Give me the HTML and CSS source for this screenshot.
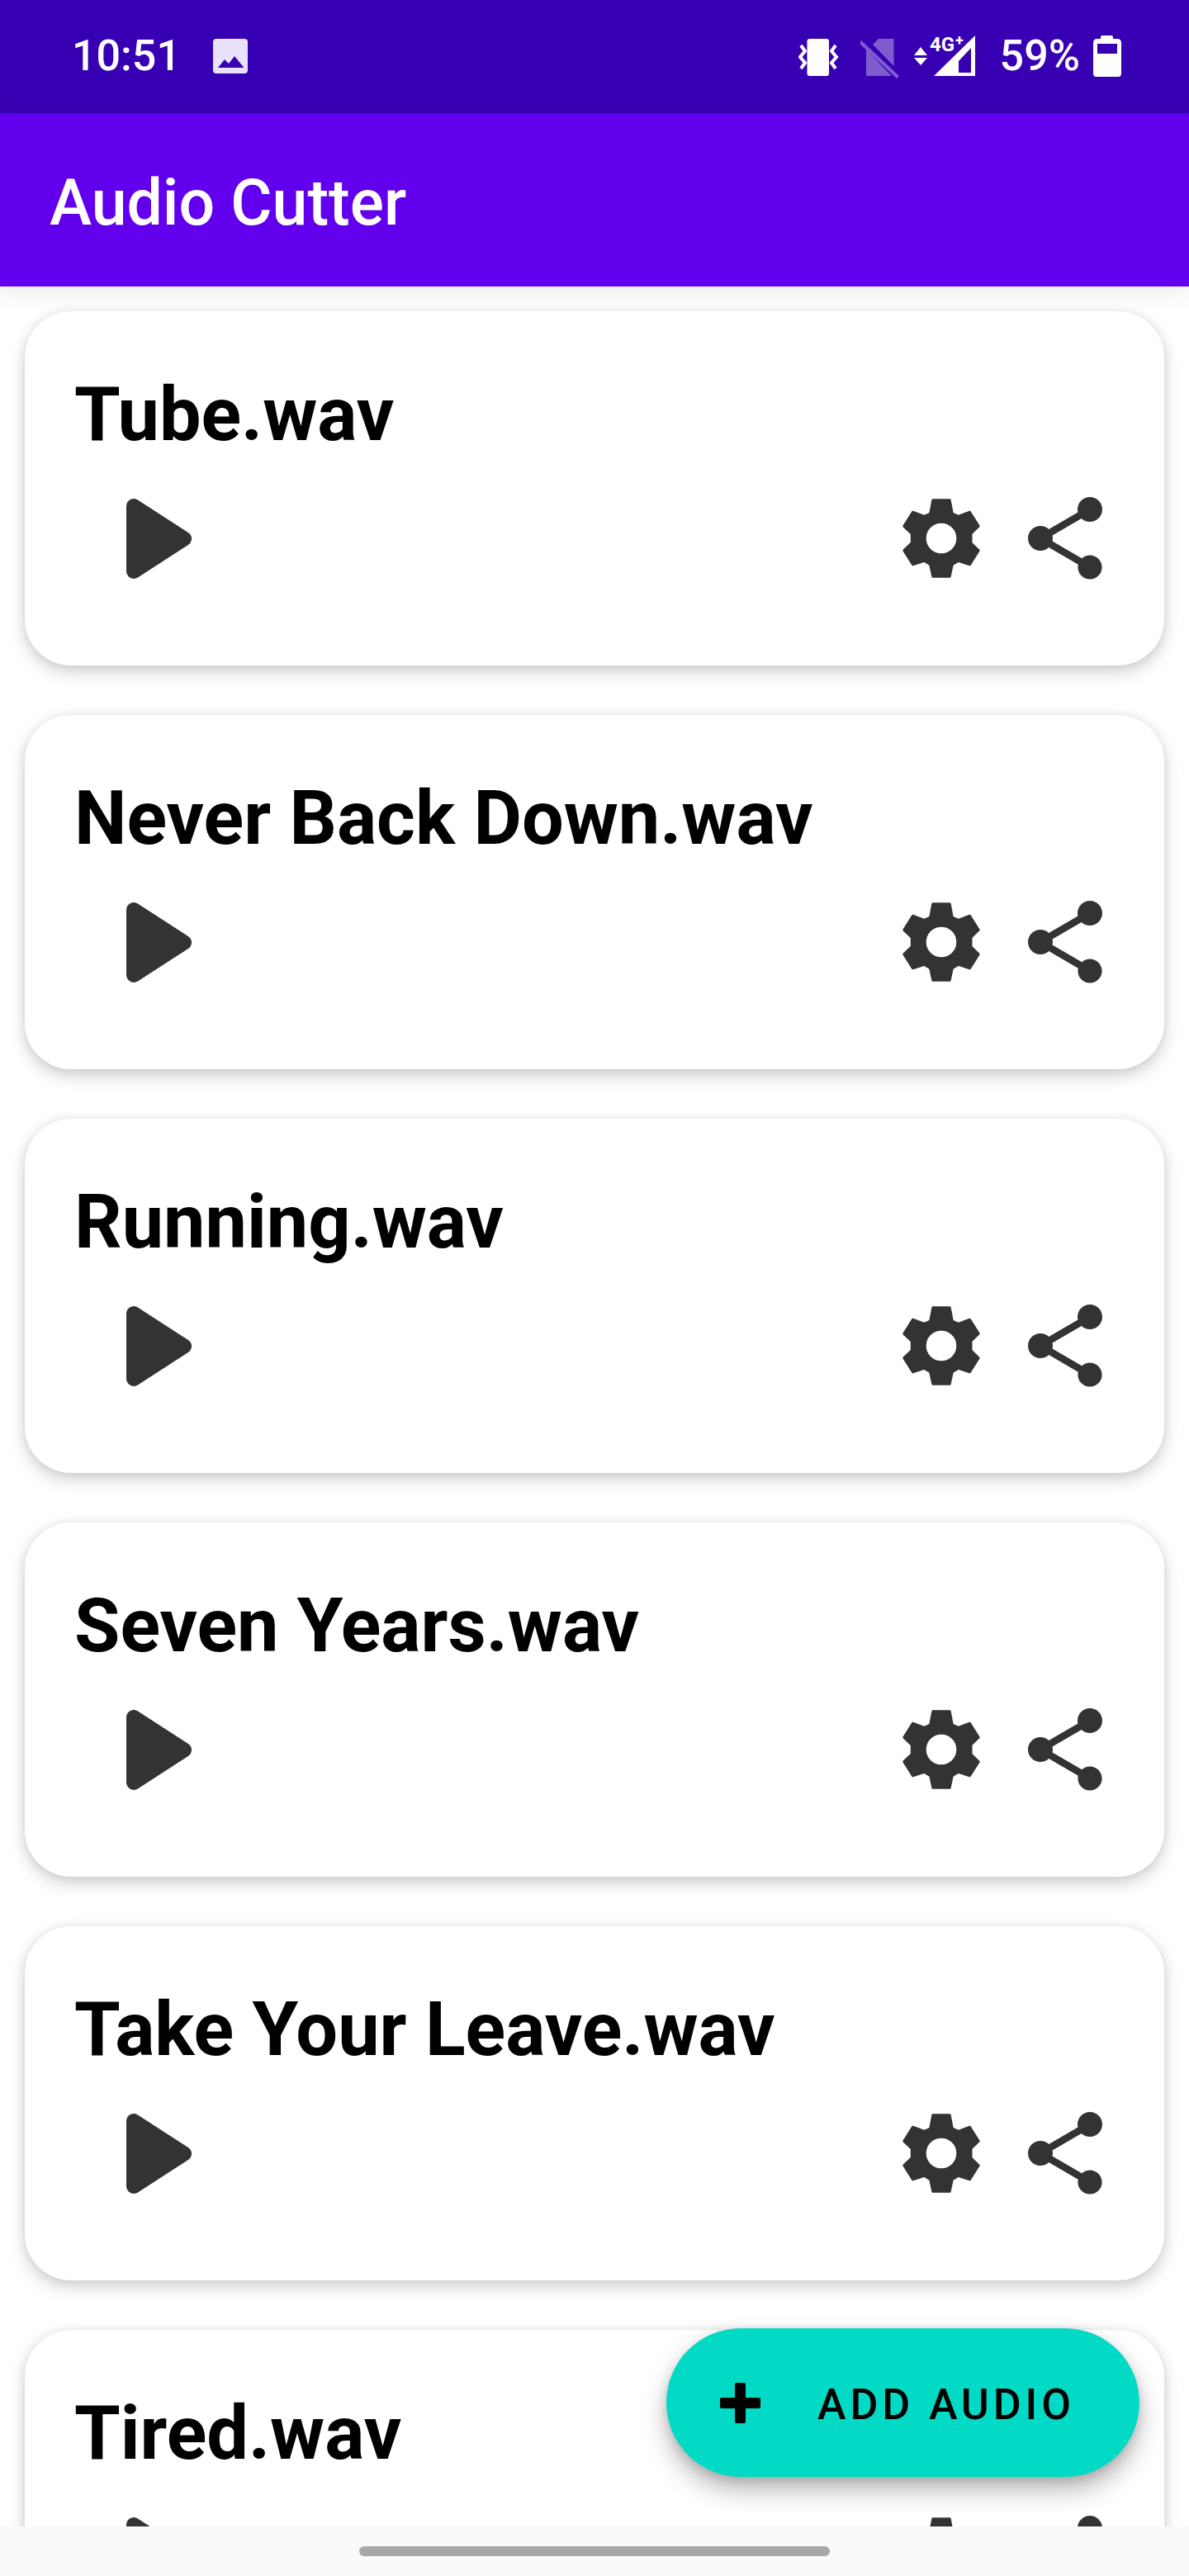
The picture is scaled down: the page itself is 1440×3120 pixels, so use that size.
FILE: index.html
```html
<!DOCTYPE html>
<html lang="en">
<head>
<meta charset="utf-8">
<title>Audio Cutter</title>
<link rel="stylesheet" href="styles.css">
</head>
<body>
<svg class="defs" aria-hidden="true">
  <defs>
    <symbol id="play" viewBox="153 603 79 97"><polygon points="162,612 162,691 223,651.5" fill="#333" stroke="#333" stroke-width="18" stroke-linejoin="round"/></symbol>
    <symbol id="gear" viewBox="0 0 120 120"><path fill="#333" fill-rule="evenodd" stroke="#333" stroke-width="3" stroke-linejoin="round" d="M49.8 13.800H70.200L73.300 30L80.700 33.300L94.500 28.200L105.200 45.300L96 54.300V65.700L105.200 74.700L94.500 91.800L80.700 87.300L73.300 91.700L70.200 106.200H49.800L46.700 91.700L39.300 87.300L25.500 91.800L14.800 74.700L24.300 65.700V54.300L14.800 45.300L25.500 28.200L39.300 33.300L46.700 30ZM60 40.200A19.800 19.800 0 1 0 60 79.800A19.800 19.800 0 1 0 60 40.200Z"/></symbol>
    <symbol id="share" viewBox="0 0 24 24"><path fill="#333" d="M18 16.08c-.76 0-1.44.3-1.96.77L8.91 12.7c.05-.23.09-.46.09-.7s-.04-.47-.09-.7l7.05-4.11c.54.5 1.25.81 2.04.81 1.66 0 3-1.34 3-3s-1.34-3-3-3-3 1.34-3 3c0 .24.04.47.09.7L8.04 9.81C7.5 9.31 6.79 9 6 9c-1.66 0-3 1.34-3 3s1.34 3 3 3c.79 0 1.5-.31 2.04-.81l7.12 4.16c-.05.21-.08.43-.08.65 0 1.61 1.31 2.92 2.92 2.92s2.92-1.31 2.92-2.92-1.31-2.92-2.92-2.92z"/></symbol>
  </defs>
</svg>
<div class="screen">
  <header class="status-bar">
    <div class="status-left">
      <span class="clock">10:51</span>
      <svg class="ic-image" viewBox="256 47 42 42"><rect x="256" y="47" width="42" height="42" rx="4" fill="#e9e2fb"/><polygon points="262,82 270,72 275,77 282,68 293.500,82" fill="#3700b3"/></svg>
    </div>
    <div class="status-right">
      <svg class="ic-vibrate" viewBox="967 30 49 70"><rect x="977.5" y="47" width="26.5" height="45" rx="3" fill="#fff"/><polyline points="970,55 975,62 969,69 975,76 970,83" fill="none" stroke="#fff" stroke-width="4"/><polyline points="1012,55 1007,62 1013,69 1007,76 1012,83" fill="none" stroke="#fff" stroke-width="4"/></svg>
      <svg class="ic-sim" viewBox="1043 30 46 70"><g fill="#fff" fill-opacity=".36"><polygon points="1058,54 1065,47 1083.5,47 1083.5,80"/><polygon points="1050,57 1050,92 1081,92 1050,60"/><polygon points="1041,52 1044,49 1090,92 1087,95"/></g></svg>
      <svg class="ic-net" viewBox="1108 30 75 70"><polygon points="1116,57 1124,67 1108,67" fill="#fff"/><polygon points="1108,70 1124,70 1116,79" fill="#fff"/><path fill="#fff" fill-rule="evenodd" d="M1182 43V92H1132ZM1177 58L1162 74V88H1177Z"/><text x="1127" y="62" class="net-label">4G</text><text x="1158" y="55" class="net-plus">+</text></svg>
      <span class="battery-text">59%</span>
      <svg class="ic-battery" viewBox="1324 30 34 70"><path fill="#fff" fill-rule="evenodd" d="M1335 43H1346Q1348 43 1348 45V47H1353Q1358 47 1358 52V89Q1358 93 1354 93H1328Q1324 93 1324 89V52Q1324 47 1329 47H1333V45Q1333 43 1335 43ZM1329 53V65H1353V53Z"/></svg>
    </div>
  </header>
  <div class="toolbar"><h1 class="app-title">Audio Cutter</h1></div>
  <main class="list">
    <article class="card">
      <h2 class="track-name">Tube.wav</h2>
      <div class="actions">
        <svg class="play"><use href="#play"/></svg>
        <div class="tools"><svg class="tool"><use href="#gear"/></svg><svg class="tool"><use href="#share"/></svg></div>
      </div>
    </article>
    <article class="card">
      <h2 class="track-name">Never Back Down.wav</h2>
      <div class="actions">
        <svg class="play"><use href="#play"/></svg>
        <div class="tools"><svg class="tool"><use href="#gear"/></svg><svg class="tool"><use href="#share"/></svg></div>
      </div>
    </article>
    <article class="card">
      <h2 class="track-name">Running.wav</h2>
      <div class="actions">
        <svg class="play"><use href="#play"/></svg>
        <div class="tools"><svg class="tool"><use href="#gear"/></svg><svg class="tool"><use href="#share"/></svg></div>
      </div>
    </article>
    <article class="card">
      <h2 class="track-name">Seven Years.wav</h2>
      <div class="actions">
        <svg class="play"><use href="#play"/></svg>
        <div class="tools"><svg class="tool"><use href="#gear"/></svg><svg class="tool"><use href="#share"/></svg></div>
      </div>
    </article>
    <article class="card">
      <h2 class="track-name">Take Your Leave.wav</h2>
      <div class="actions">
        <svg class="play"><use href="#play"/></svg>
        <div class="tools"><svg class="tool"><use href="#gear"/></svg><svg class="tool"><use href="#share"/></svg></div>
      </div>
    </article>
    <article class="card">
      <h2 class="track-name">Tired.wav</h2>
      <div class="actions">
        <svg class="play"><use href="#play"/></svg>
        <div class="tools"><svg class="tool"><use href="#gear"/></svg><svg class="tool"><use href="#share"/></svg></div>
      </div>
    </article>
  </main>
  <footer class="nav-bar"><div class="nav-pill"></div></footer>
  <button class="fab" type="button">
    <svg class="fab-plus" viewBox="0 0 49 49"><path d="M24.500 3V46M3 24.500H46" stroke="#000" stroke-width="13" stroke-linecap="round" fill="none"/></svg>
    <span class="fab-label">ADD AUDIO</span>
  </button>
</div>
</body>
</html>
```
FILE: styles.css
```css
* { box-sizing: border-box; }
html, body { margin: 0; padding: 0; }
html { height: 3120px; overflow: hidden; }
body { width: 1440px; height: 3120px; overflow: hidden; font-family: Roboto, "Liberation Sans", sans-serif; background: #fff; }
.defs { display: none; }
.screen { position: relative; width: 1440px; height: 3120px; display: flex; flex-direction: column; overflow: hidden; }

.status-bar { flex: 0 0 137px; background: #3700b3; color: #fff; display: flex; justify-content: space-between; align-items: flex-start; }
.status-left { display: flex; align-items: flex-start; padding: 37px 0 0 87px; }
.clock { font-size: 52px; line-height: 62px; font-weight: 500; }
.ic-image { width: 42px; height: 42px; margin: 10px 0 0 39px; }
.status-right { display: flex; align-items: flex-start; padding: 0 82px 0 0; }
.status-right svg { display: block; height: 70px; margin-top: 30px; }
.ic-vibrate { width: 49px; }
.ic-sim { width: 46px; margin-left: 26px; }
.ic-net { width: 75px; margin-left: 19px; }
.net-label { font: 700 24px Roboto, sans-serif; fill: #fff; }
.net-plus { font: 700 18px Roboto, sans-serif; fill: #fff; }
.battery-text { font-size: 52px; line-height: 62px; margin: 37px 0 0 29px; font-weight: 500; }
.ic-battery { width: 34px; margin-left: 16px; }

.toolbar { flex: 0 0 210px; background: #6200ee; display: flex; align-items: center; padding: 8px 0 0 60px; position: relative; z-index: 2; box-shadow: 0 4px 28px rgba(0,0,0,.10); }
.app-title { margin: 0; font-size: 77px; font-weight: 500; color: #fff; }

.list { flex: 1 1 auto; min-height: 0; overflow: hidden; padding: 30px 30px 0; display: flex; flex-direction: column; gap: 60px; }
.card { flex: 0 0 429px; background: #fff; border-radius: 56px; box-shadow: 0 8px 20px rgba(0,0,0,.18), 0 0 12px rgba(0,0,0,.07); padding: 76px 60px 0 60px; }
.track-name { margin: 0; font-size: 90px; line-height: 100px; font-weight: 700; color: #000; }
.actions { display: flex; justify-content: space-between; align-items: center; height: 120px; margin-top: 39px; padding-left: 63px; }
.play { width: 79px; height: 97px; }
.tools { display: flex; gap: 30px; }
.tool { width: 120px; height: 120px; display: block; }

.nav-bar { flex: 0 0 60px; background: #fafafa; display: flex; justify-content: center; padding-top: 24px; position: relative; z-index: 2; }
.nav-pill { width: 570px; height: 12px; border-radius: 6px; background: #a8a8a8; }

.fab { position: absolute; z-index: 3; left: 807px; top: 2820px; width: 573px; height: 180px; border: 0; border-radius: 90px; background: #03dac5; display: flex; align-items: center; padding: 0 0 0 65px; box-shadow: 0 16px 30px rgba(0,0,0,.28), 0 4px 12px rgba(0,0,0,.12); font-family: Roboto, sans-serif; color: #000; }
.fab-plus { width: 49px; height: 49px; flex: none; }
.fab-label { margin-left: 69px; padding-top: 4px; font-size: 52px; font-weight: 500; letter-spacing: 4.9px; white-space: nowrap; }
```
